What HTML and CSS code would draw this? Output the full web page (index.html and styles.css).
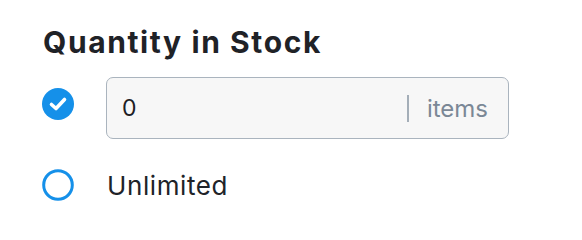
FILE: index.html
```html
<!DOCTYPE html>
<html>
<head>
<meta charset="utf-8">
<link rel="stylesheet" href="styles.css">
</head>
<body>
<div class="field">
  <h2 class="title">Quantity in Stock</h2>
  <div class="option option-first">
    <span class="radio radio-checked">
      <svg width="32" height="32" viewBox="0 0 32 32"><circle cx="16" cy="16" r="16" fill="#1590e9"/><path d="M9.5 16.5 L14 20.5 L22.5 11.5" fill="none" stroke="#fff" stroke-width="3.6" stroke-linecap="round" stroke-linejoin="round"/></svg>
    </span>
    <div class="input">
      <span class="value">0</span>
      <span class="divider"></span>
      <span class="unit">items</span>
    </div>
  </div>
  <div class="option option-second">
    <span class="radio">
      <svg width="32" height="32" viewBox="0 0 32 32"><circle cx="16" cy="16" r="14.3" fill="none" stroke="#1590e9" stroke-width="3"/></svg>
    </span>
    <span class="label">Unlimited</span>
  </div>
</div>
</body>
</html>
```
FILE: styles.css
```css
html, body {
  margin: 0;
  padding: 0;
  background: #ffffff;
}
body {
  font-family: "Inter", "Open Sans", sans-serif;
  color: #202328;
}
.field {
  padding: 24px 0 0 42px;
}
.title {
  margin: 0 0 0 1px;
  font-size: 30px;
  line-height: 36px;
  font-weight: 700;
  letter-spacing: 1.6px;
  color: #1f2227;
}
.option {
  display: flex;
  align-items: center;
}
.option-first {
  margin-top: 17px;
  align-items: flex-start;
}
.option-first .radio {
  margin-top: 11px;
}
.option-second {
  margin-top: 30px;
}
.radio {
  width: 32px;
  height: 32px;
  flex: 0 0 32px;
  display: block;
}
.radio svg {
  display: block;
}
.input {
  margin-left: 32px;
  width: 403px;
  height: 62px;
  box-sizing: border-box;
  border: 1.5px solid #aab4be;
  border-radius: 7px;
  background: #f7f7f7;
  display: flex;
  align-items: center;
  padding: 0 20px 0 15px;
}
.value {
  flex: 1;
  font-size: 23px;
  color: #1d2024;
}
.divider {
  width: 2px;
  height: 27px;
  background: #a4aeb8;
  margin-right: 18px;
}
.unit {
  font-size: 24px;
  color: #7b8896;
}
.label {
  margin-left: 33px;
  font-size: 26px;
  letter-spacing: 0.6px;
  color: #202328;
}
```
